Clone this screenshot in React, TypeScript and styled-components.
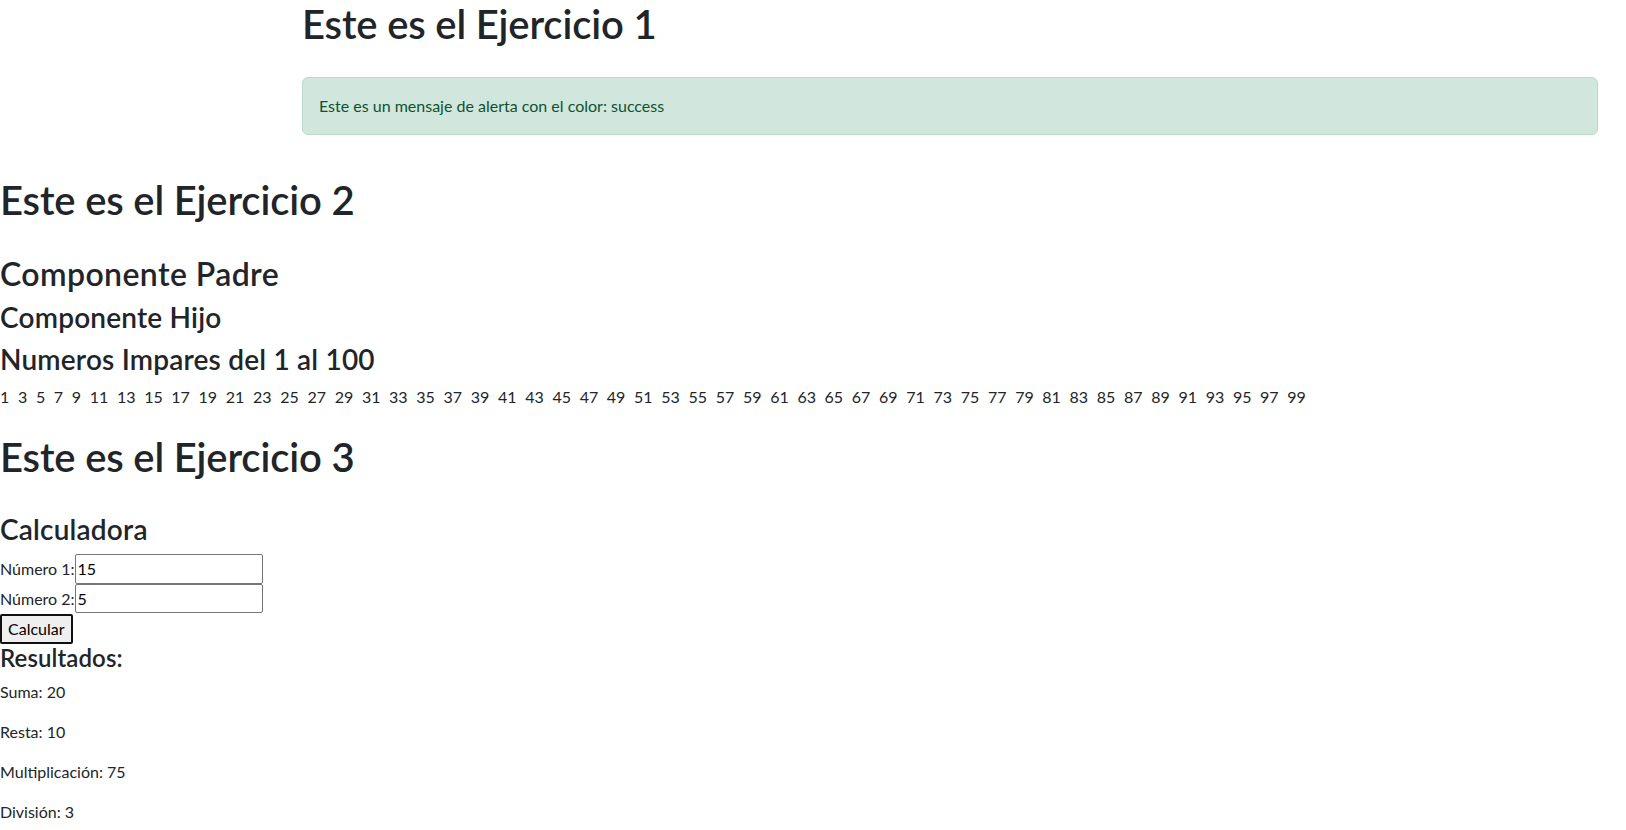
import React, { useState } from "react";
import styled, { createGlobalStyle } from "styled-components";

const GlobalStyle = createGlobalStyle`
  html { overflow: hidden; }
  body {
    margin: 0;
    font-family: "Lato", "Liberation Sans", sans-serif;
    font-size: 16px;
    line-height: 1.5;
    color: #212529;
    background: #fff;
  }
  *, *::before, *::after { box-sizing: border-box; }
`;

const Page = styled.main`
  display: flex;
  flex-direction: column;
`;

const Section = styled.section<{ $inset?: boolean; $mt?: number }>`
  display: flex;
  flex-direction: column;
  align-items: stretch;
  margin-top: ${(p) => p.$mt ?? 0}px;
  padding: ${(p) => (p.$inset ? "0 28px 0 302px" : "0")};
`;

const Title = styled.h1<{ $mb?: number }>`
  margin: 0 0 ${(p) => p.$mb ?? 8}px;
  font-size: 40px;
  font-weight: 600;
  line-height: 1.2;
  letter-spacing: -0.15px;
`;

const SubTitle = styled.h2`
  margin: 0 0 8px;
  font-size: 32px;
  font-weight: 600;
  line-height: 1.2;
  letter-spacing: 0.4px;
`;

const Heading3 = styled.h3`
  margin: 0 0 8px;
  font-size: 28px;
  font-weight: 600;
  line-height: 1.2;
  letter-spacing: 0.2px;
`;

const Heading4 = styled.h4`
  margin: 0 0 8px;
  font-size: 24px;
  font-weight: 600;
  line-height: 1.2;
  letter-spacing: 0.1px;
`;

const Alert = styled.div`
  padding: 16px;
  border: 1px solid #badbcc;
  border-radius: 6px;
  background: #d1e7dd;
  color: #0f5132;
  line-height: 24px;
`;

const NumberList = styled.div`
  display: flex;
  flex-wrap: wrap;
  column-gap: 8.66px;
  line-height: 24px;
`;

const Num = styled.span``;

const Calculator = styled.div`
  display: flex;
  flex-direction: column;
  align-items: flex-start;
`;

const Field = styled.div`
  display: flex;
  align-items: baseline;
`;

const Label = styled.label`
  line-height: 24px;
`;

const Input = styled.input`
  width: 188px;
  height: 29.5px;
  padding: 1px 2px;
  border: 1px solid #767676;
  border-radius: 2px;
  font: inherit;
  line-height: 24px;
  color: #000;
  background: #fff;
`;

const Button = styled.button`
  height: 29.5px;
  margin-top: 1px;
  padding: 0 6px;
  border: 2px solid #101010;
  border-radius: 2px;
  background: #efefef;
  color: #000;
  font: inherit;
  line-height: 24px;
  cursor: pointer;
`;

const Result = styled.p<{ $last?: boolean }>`
  margin: 0 0 ${(p) => (p.$last ? 0 : 16)}px;
  line-height: 24px;
`;

const odds = Array.from({ length: 50 }, (_, i) => i * 2 + 1);

export default function App() {
  const [a, setA] = useState("15");
  const [b, setB] = useState("5");
  const [res, setRes] = useState({ suma: 20, resta: 10, mult: 75, div: 3 });

  const calcular = () => {
    const x = parseFloat(a) || 0;
    const y = parseFloat(b) || 0;
    setRes({ suma: x + y, resta: x - y, mult: x * y, div: y !== 0 ? x / y : NaN });
  };

  return (
    <Page>
      <GlobalStyle />
      <Section $inset>
        <Title $mb={29}>Este es el Ejercicio 1</Title>
        <Alert role="alert">Este es un mensaje de alerta con el color: success</Alert>
      </Section>

      <Section $mt={40.5}>
        <Title $mb={31.5}>Este es el Ejercicio 2</Title>
        <SubTitle>Componente Padre</SubTitle>
        <Heading3>Componente Hijo</Heading3>
        <Heading3>Numeros Impares del 1 al 100</Heading3>
        <NumberList>
          {odds.map((n) => (
            <Num key={n}>{n}</Num>
          ))}
        </NumberList>
      </Section>

      <Section $mt={24.5}>
        <Title $mb={31.5}>Este es el Ejercicio 3</Title>
        <Heading3>Calculadora</Heading3>
        <Calculator>
          <Field>
            <Label htmlFor="n1">Número 1:</Label>
            <Input id="n1" type="text" value={a} onChange={(e) => setA(e.target.value)} />
          </Field>
          <Field>
            <Label htmlFor="n2">Número 2:</Label>
            <Input id="n2" type="text" value={b} onChange={(e) => setB(e.target.value)} />
          </Field>
          <Button type="button" onClick={calcular}>Calcular</Button>
        </Calculator>
        <Heading4>Resultados:</Heading4>
        <Result>Suma: {res.suma}</Result>
        <Result>Resta: {res.resta}</Result>
        <Result>Multiplicación: {res.mult}</Result>
        <Result $last>División: {res.div}</Result>
      </Section>
    </Page>
  );
}
